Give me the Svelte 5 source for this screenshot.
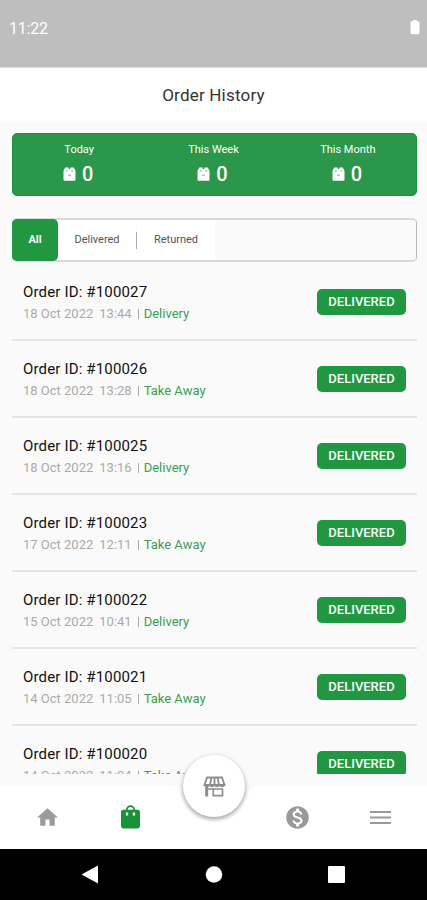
<script>
  const stats = ['Today', 'This Week', 'This Month'];
  const orders = [
    { id: 100027, date: '18 Oct 2022', time: '13:44', type: 'Delivery' },
    { id: 100026, date: '18 Oct 2022', time: '13:28', type: 'Take Away' },
    { id: 100025, date: '18 Oct 2022', time: '13:16', type: 'Delivery' },
    { id: 100023, date: '17 Oct 2022', time: '12:11', type: 'Take Away' },
    { id: 100022, date: '15 Oct 2022', time: '10:41', type: 'Delivery' },
    { id: 100021, date: '14 Oct 2022', time: '11:05', type: 'Take Away' },
    { id: 100020, date: '14 Oct 2022', time: '11:04', type: 'Take Away' },
  ];
</script>

<div class="screen">
  <div class="status">
    <span class="clock">11:22</span>
    <svg class="battery" width="10" height="15" viewBox="0 0 10 15"><path fill="#fff" d="M3 0h4v1.3h1.3q1.2 0 1.2 1.2v10.6q0 1.2-1.2 1.2H1.7q-1.2 0-1.2-1.2V2.5q0-1.2 1.2-1.2H3z" /></svg>
  </div>
  <header><h1>Order History</h1></header>

  <main>
    <section class="stats">
      {#each stats as label}
        <div class="stat">
          <span class="label">{label}</span>
          <div class="value">
            <svg width="13" height="14" viewBox="0 0 13 14">
              <path fill="#fff" d="M2.200.5h3.500v1.500h1.600V.5h3.500l1.700 3.500v8.700q0 1-1 1h-10q-1 0-1-1V4z" />
              <path d="M2.600 3.900h2.200M8.200 3.900h2.200M5 8.200h3" fill="none" stroke="#2b974a" stroke-width=".9" opacity=".7" />
            </svg>
            <span>0</span>
          </div>
        </div>
      {/each}
    </section>

    <nav class="tabs">
      <button class="tab all">All</button>
      <button class="tab delivered">Delivered</button>
      <i></i>
      <button class="tab returned">Returned</button>
    </nav>

    <section class="list">
      {#each orders as o}
        <article>
          <div>
            <div class="title">Order ID: #{o.id}</div>
            <div class="meta"><span class="date">{o.date}</span><span class="time">{o.time}</span><b></b><span class="type">{o.type}</span></div>
          </div>
          <span class="badge">DELIVERED</span>
        </article>
      {/each}
    </section>
  </main>

  <footer>
    <svg class="shape" width="427" height="63" viewBox="0 0 427 63"><path fill="#fff" d="M0 0H168C177 0 179 4 181 10C186 26 198 35 214 35C230 35 242 26 247 10C249 4 251 0 260 0H427V63H0z" /></svg>
    <div class="items">
      <svg width="25" height="25" viewBox="0 0 24 24"><path fill="#9b9b9b" d="M10 20v-6h4v6h5v-8h3L12 3 2 12h3v8z" /></svg>
      <svg width="25" height="27" viewBox="0 0 25 27"><path fill="#169336" d="M5.300 5.800h2.600C8.100 3.200 10 1.300 12.500 1.300s4.400 1.900 4.600 4.500h2.600q2.300 0 2.300 2.300v14q0 2.300-2.300 2.300H5.300Q3 24.400 3 22.100v-14q0-2.300 2.300-2.300zM9.700 5.800h5.600C15.200 4.200 14.100 3.100 12.500 3.100S9.800 4.200 9.700 5.800z" fill-rule="evenodd" /><path fill="#fff" d="M7.900 8.500h2.300v3H7.900zM14.800 8.500h2.300v3h-2.300z" /></svg>
      <span></span>
      <svg class="coin" width="27" height="27" viewBox="0 0 24 24"><path fill="#999" d="M12 2C6.480 2 2 6.480 2 12s4.480 10 10 10 10-4.480 10-10S17.520 2 12 2zm1.410 16.090V20h-2.670v-1.930c-1.710-.36-3.160-1.460-3.270-3.400h1.960c.1 1.050.82 1.870 2.650 1.870 1.960 0 2.400-.98 2.400-1.590 0-.83-.44-1.610-2.670-2.140-2.480-.6-4.180-1.620-4.180-3.670 0-1.720 1.390-2.840 3.110-3.210V4h2.670v1.950c1.860.45 2.790 1.860 2.850 3.390H14.300c-.05-1.110-.64-1.870-2.220-1.870-1.500 0-2.400.68-2.400 1.640 0 .84.65 1.390 2.670 1.910s4.180 1.390 4.180 3.910c-.01 1.830-1.380 2.830-3.120 3.160z" /></svg>
      <svg class="menu" width="25" height="25" viewBox="0 0 25 25"><path stroke="#999" stroke-width="2" d="M2 7h21M2 12.500h21M2 18h21" /></svg>
    </div>
    <div class="fab">
      <svg width="23" height="21" viewBox="0 0 23 21" fill="none" stroke="#8b8d8f" stroke-width="1.800">
        <path d="M4 1.500h15l2.500 7.500H1.500zM8.300 2L7 9M11.500 2v7M14.700 2L16 9" />
        <path d="M1.500 9.300q2.500 2.400 5 0q2.500 2.400 5 0q2.500 2.400 5 0q2.500 2.400 5 0" stroke-width="1.400" />
        <path d="M3.700 10.500v10" stroke-width="3" /><path d="M4 13h15.500v6.700h-9.200V13" stroke-width="1.700" />
      </svg>
    </div>
  </footer>

  <div class="system">
    <svg width="427" height="50" viewBox="0 0 427 50" fill="#fff"><path d="M98 16.500v18L81.500 25.500z" /><circle cx="214" cy="25.500" r="8.300" /><rect x="328" y="17" width="17" height="17" rx="1" /></svg>
  </div>
</div>

<style>
  :global(body) { margin: 0; }
  .screen { width: 427px; height: 900px; overflow: hidden; display: flex; flex-direction: column; background: #fafafa; font-family: Roboto, sans-serif; }
  .status { height: 68px; flex: none; box-sizing: border-box; background: #bebebe; padding: 20px 7px 0 9px; display: flex; justify-content: space-between; align-items: flex-start; border-bottom: 1px solid #dcdcdc; }
  .clock { color: #fff; font-size: 16px; line-height: 17px; letter-spacing: -.2px; }
  header { height: 54px; flex: none; background: #fff; display: flex; justify-content: center; align-items: center; }
  h1 { margin: 0; font-size: 17px; font-weight: 400; letter-spacing: .2px; color: #333; line-height: 20px; }
  main { flex: none; height: 652px; padding: 11px 10px 0 12px; box-sizing: border-box; display: flex; flex-direction: column; }
  .stats { flex: none; height: 63px; box-sizing: border-box; border: 1px solid #1b9038; border-radius: 5px; background: #2b974a; display: flex; color: #fff; padding-top: 9px; }
  .stat { flex: 1; display: flex; flex-direction: column; align-items: center; position: relative; left: -1px; }
  .label { font-size: 11px; line-height: 14px; }
  .value { display: flex; align-items: center; gap: 6px; margin: 6px 2px 0 0; font-size: 20px; line-height: 22px; font-weight: 500; }
  .tabs { flex: none; height: 44px; box-sizing: border-box; margin-top: 22px; border: 1px solid #b8bab9; border-top: 2px solid #d7dad8; border-bottom: 2px solid #d7dad8; border-radius: 5px; display: flex; align-items: center; }
  .tab { font: 400 11px/14px Roboto, sans-serif; color: #555; border: 0; padding: 0; background: #fff; height: 40px; }
  .tab.all { width: 46px; height: 42px; margin: 0 0 0 -1px; border-radius: 5px; background: #219742; color: #fff; font-weight: 700; }
  .delivered { width: 78px; }
  .tabs i { width: 1px; height: 17px; background: #aaa; box-shadow: -1px 0 #fff; }
  .returned { width: 78px; }
  .list { height: 511px; overflow: hidden; margin-top: 1px; }
  article { height: 77.1px; box-sizing: border-box; border-bottom: 2px solid #e5e5e5; display: flex; justify-content: space-between; align-items: flex-start; padding: 20px 11px 0; }
  article:first-child { height: 78px; }
  article:not(:first-child) { padding-top: 19px; }
  .title { font-size: 15px; line-height: 18px; letter-spacing: .16px; color: #111; }
  .meta { display: flex; align-items: center; font-size: 13px; line-height: 16px; margin-top: 5px; color: #aaa; }
  .time { margin-left: 6px; }
  .meta b { width: 1px; height: 10px; margin: 0 5px 0 6px; background: #aaa; }
  .type { color: #3d9c55; }
  .badge { width: 89px; height: 26px; margin-top: 6px; border-radius: 5px; background: #219742; color: #f7fff7; font-size: 13px; line-height: 26px; font-weight: 500; text-align: center; }
  footer { position: relative; flex: none; height: 63px; margin-top: 12px; }
  .shape { position: absolute; inset: 0; }
  .items { position: relative; height: 62px; display: grid; grid-template-columns: 83px 83px 83px 83px 83px; padding: 0 6px; align-items: center; justify-items: center; }
  .coin, .menu { margin-left: 2px; }
  .fab { position: absolute; left: 183px; top: -31px; width: 62px; height: 62px; border-radius: 50%; background: #fff; box-shadow: 0 2px 4px #0005, 0 1px 6px #0001; display: flex; align-items: center; justify-content: center; }
  .system { height: 51px; flex: none; background: #000; }
  .system svg { display: block; }
</style>
